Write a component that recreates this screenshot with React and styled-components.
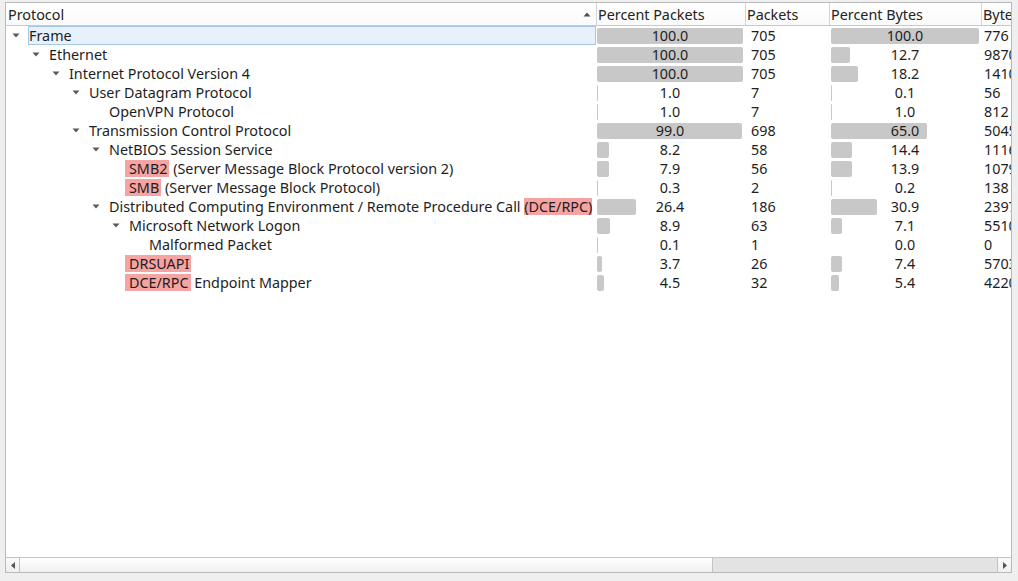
import React from "react";
import styled, { createGlobalStyle } from "styled-components";

const Global = createGlobalStyle`
  html, body { margin: 0; padding: 0; background: #efefef; }
  body { font-family: "Noto Sans", "DejaVu Sans", sans-serif; font-size: 14.35px; color: #1e1e1e; }
  #root { width: 1018px; height: 581px; overflow: hidden; }
`;

const COLS = "590px 149px 84px 152px 1fr";

const Window = styled.div`
  width: 1018px;
  height: 581px;
  padding: 2px 6px 0 5px;
  box-sizing: border-box;
`;

const Frame = styled.div`
  height: 571px;
  border: 1px solid #bababa;
  background: #ffffff;
  display: flex;
  flex-direction: column;
  overflow: hidden;
  box-sizing: border-box;
`;

const HeaderRow = styled.div`
  display: grid;
  grid-template-columns: ${COLS};
  height: 22px;
  border-bottom: 1px solid #c9c9c9;
  background: linear-gradient(#ffffff, #fafafa);
  flex: none;
`;

const HeaderCell = styled.div`
  display: flex;
  align-items: center;
  justify-content: space-between;
  padding-left: ${(p) => (p.$first ? "2px" : "1px")};
  padding-top: 1px;
  box-sizing: border-box;
  border-left: ${(p) => (p.$first ? "none" : "1px solid #d4d4d4")};
  white-space: nowrap;
  overflow: hidden;
  color: #222;
  line-height: 21px;
`;

const SortArrow = styled.svg`
  width: 8px;
  height: 5px;
  margin-right: 5px;
  flex: none;
`;

const Body = styled.div`
  flex: 1;
  overflow: hidden;
`;

const Row = styled.div`
  display: grid;
  grid-template-columns: ${COLS};
  height: 19px;
`;

const TreeCell = styled.div`
  display: flex;
  align-items: stretch;
  padding-left: ${(p) => p.$level * 20}px;
  white-space: nowrap;
  overflow: hidden;
`;

const Branch = styled.div`
  width: 20px;
  flex: none;
  display: flex;
  align-items: center;
  justify-content: center;
`;

const Label = styled.div`
  margin-left: 2px;
  flex: ${(p) => (p.$selected ? 1 : "none")};
  display: flex;
  align-items: center;
  border: 1px solid ${(p) => (p.$selected ? "#a6c8e6" : "transparent")};
  background: ${(p) => (p.$selected ? "#e7f1fb" : "transparent")};
  line-height: 17px;
`;

const Plain = styled.span`
  white-space: pre;
`;

const Hl = styled.span`
  background: #f6a3a3;
  padding: 0 ${(p) => (p.$tight ? 0 : 2)}px 0 ${(p) => (p.$tight ? 0 : 4)}px;
  margin-left: ${(p) => (p.$tight ? 0 : -4)}px;
`;

const PctCell = styled.div`
  position: relative;
  padding: 1px 2px 1px ${(p) => p.$pl}px;
  display: flex;
  align-items: center;
  justify-content: center;
  line-height: 17px;
`;

const BarTrack = styled.div`
  position: absolute;
  left: ${(p) => p.$pl}px;
  right: 2px;
  top: 1.5px;
  bottom: 1.5px;
`;

const Bar = styled.div`
  height: 100%;
  background: #c8c8c8;
  border-radius: 2px;
`;

const PctText = styled.span`
  position: relative;
`;

const NumCell = styled.div`
  display: flex;
  align-items: center;
  padding-left: ${(p) => p.$pl}px;
  white-space: nowrap;
  overflow: hidden;
  line-height: 17px;
`;

const ScrollBar = styled.div`
  flex: none;
  height: 14px;
  border-top: 1px solid #c4c4c4;
  display: flex;
  background: #e3e3e3;
`;

const ScrollButton = styled.div`
  width: 13px;
  flex: none;
  display: flex;
  align-items: center;
  justify-content: center;
  background: linear-gradient(#fbfbfb, #efefef);
  border-right: ${(p) => (p.$left ? "1px solid #c4c4c4" : "none")};
  border-left: ${(p) => (p.$left ? "none" : "1px solid #c4c4c4")};
`;

const Thumb = styled.div`
  width: 692px;
  flex: none;
  background: linear-gradient(#ffffff, #f0f0f0);
  border-right: 1px solid #c4c4c4;
`;

const Track = styled.div`
  flex: 1;
  background: #e3e3e3;
`;

const Tri = () => (
  <svg width="8" height="5" viewBox="0 0 8 5">
    <path d="M0.5 0.5 L7.5 0.5 L4 4.5 Z" fill="#5a5a5a" />
  </svg>
);

const H = (t, tight) => ({ h: t, tight });

const rows = [
  { l: 0, e: true, n: ["Frame"], pp: 100.0, p: "705", pb: 100.0, b: "776", sel: true },
  { l: 1, e: true, n: ["Ethernet"], pp: 100.0, p: "705", pb: 12.7, b: "98704" },
  { l: 2, e: true, n: ["Internet Protocol Version 4"], pp: 100.0, p: "705", pb: 18.2, b: "141040" },
  { l: 3, e: true, n: ["User Datagram Protocol"], pp: 1.0, p: "7", pb: 0.1, b: "56" },
  { l: 4, n: ["OpenVPN Protocol"], pp: 1.0, p: "7", pb: 1.0, b: "812" },
  { l: 3, e: true, n: ["Transmission Control Protocol"], pp: 99.0, p: "698", pb: 65.0, b: "504568" },
  { l: 4, e: true, n: ["NetBIOS Session Service"], pp: 8.2, p: "58", pb: 14.4, b: "111680" },
  { l: 5, n: [H("SMB2"), " (Server Message Block Protocol version 2)"], pp: 7.9, p: "56", pb: 13.9, b: "107950" },
  { l: 5, n: [H("SMB"), " (Server Message Block Protocol)"], pp: 0.3, p: "2", pb: 0.2, b: "138" },
  { l: 4, e: true, n: ["Distributed Computing Environment / Remote Procedure Call ", H("(DCE/RPC)", true)], pp: 26.4, p: "186", pb: 30.9, b: "239744" },
  { l: 5, e: true, n: ["Microsoft Network Logon"], pp: 8.9, p: "63", pb: 7.1, b: "55108" },
  { l: 6, n: ["Malformed Packet"], pp: 0.1, p: "1", pb: 0.0, b: "0" },
  { l: 5, n: [H("DRSUAPI")], pp: 3.7, p: "26", pb: 7.4, b: "57034" },
  { l: 5, n: [H("DCE/RPC"), " Endpoint Mapper"], pp: 4.5, p: "32", pb: 5.4, b: "42200" },
];

const Pct = ({ v, pl }) => (
  <PctCell $pl={pl}>
    <BarTrack $pl={pl}>
      <Bar style={{ width: `${v}%` }} />
    </BarTrack>
    <PctText>{v.toFixed(1)}</PctText>
  </PctCell>
);

export default function App() {
  return (
    <>
      <Global />
      <Window>
        <Frame>
          <HeaderRow>
            <HeaderCell $first>
              <span>Protocol</span>
              <SortArrow viewBox="0 0 8 5">
                <path d="M0.5 4.5 L7.5 4.5 L4 0.5 Z" fill="#505050" />
              </SortArrow>
            </HeaderCell>
            <HeaderCell>Percent Packets</HeaderCell>
            <HeaderCell>Packets</HeaderCell>
            <HeaderCell>Percent Bytes</HeaderCell>
            <HeaderCell>Bytes</HeaderCell>
          </HeaderRow>
          <Body>
            {rows.map((r, i) => (
              <Row key={i}>
                <TreeCell $level={r.l}>
                  <Branch>{r.e ? <Tri /> : null}</Branch>
                  <Label $selected={r.sel}>
                    {r.n.map((part, j) =>
                      typeof part === "string" ? (
                        <Plain key={j}>{part}</Plain>
                      ) : (
                        <Hl key={j} $tight={part.tight}>{part.h}</Hl>
                      )
                    )}
                  </Label>
                </TreeCell>
                <Pct v={r.pp} pl={1} />
                <NumCell $pl={6}>{r.p}</NumCell>
                <Pct v={r.pb} pl={2} />
                <NumCell $pl={3}>{r.b}</NumCell>
              </Row>
            ))}
          </Body>
          <ScrollBar>
            <ScrollButton $left>
              <svg width="4" height="7" viewBox="0 0 4 7">
                <path d="M4 0 L0 3.5 L4 7 Z" fill="#555" />
              </svg>
            </ScrollButton>
            <Thumb />
            <Track />
            <ScrollButton>
              <svg width="4" height="7" viewBox="0 0 4 7">
                <path d="M0 0 L4 3.5 L0 7 Z" fill="#555" />
              </svg>
            </ScrollButton>
          </ScrollBar>
        </Frame>
      </Window>
    </>
  );
}
